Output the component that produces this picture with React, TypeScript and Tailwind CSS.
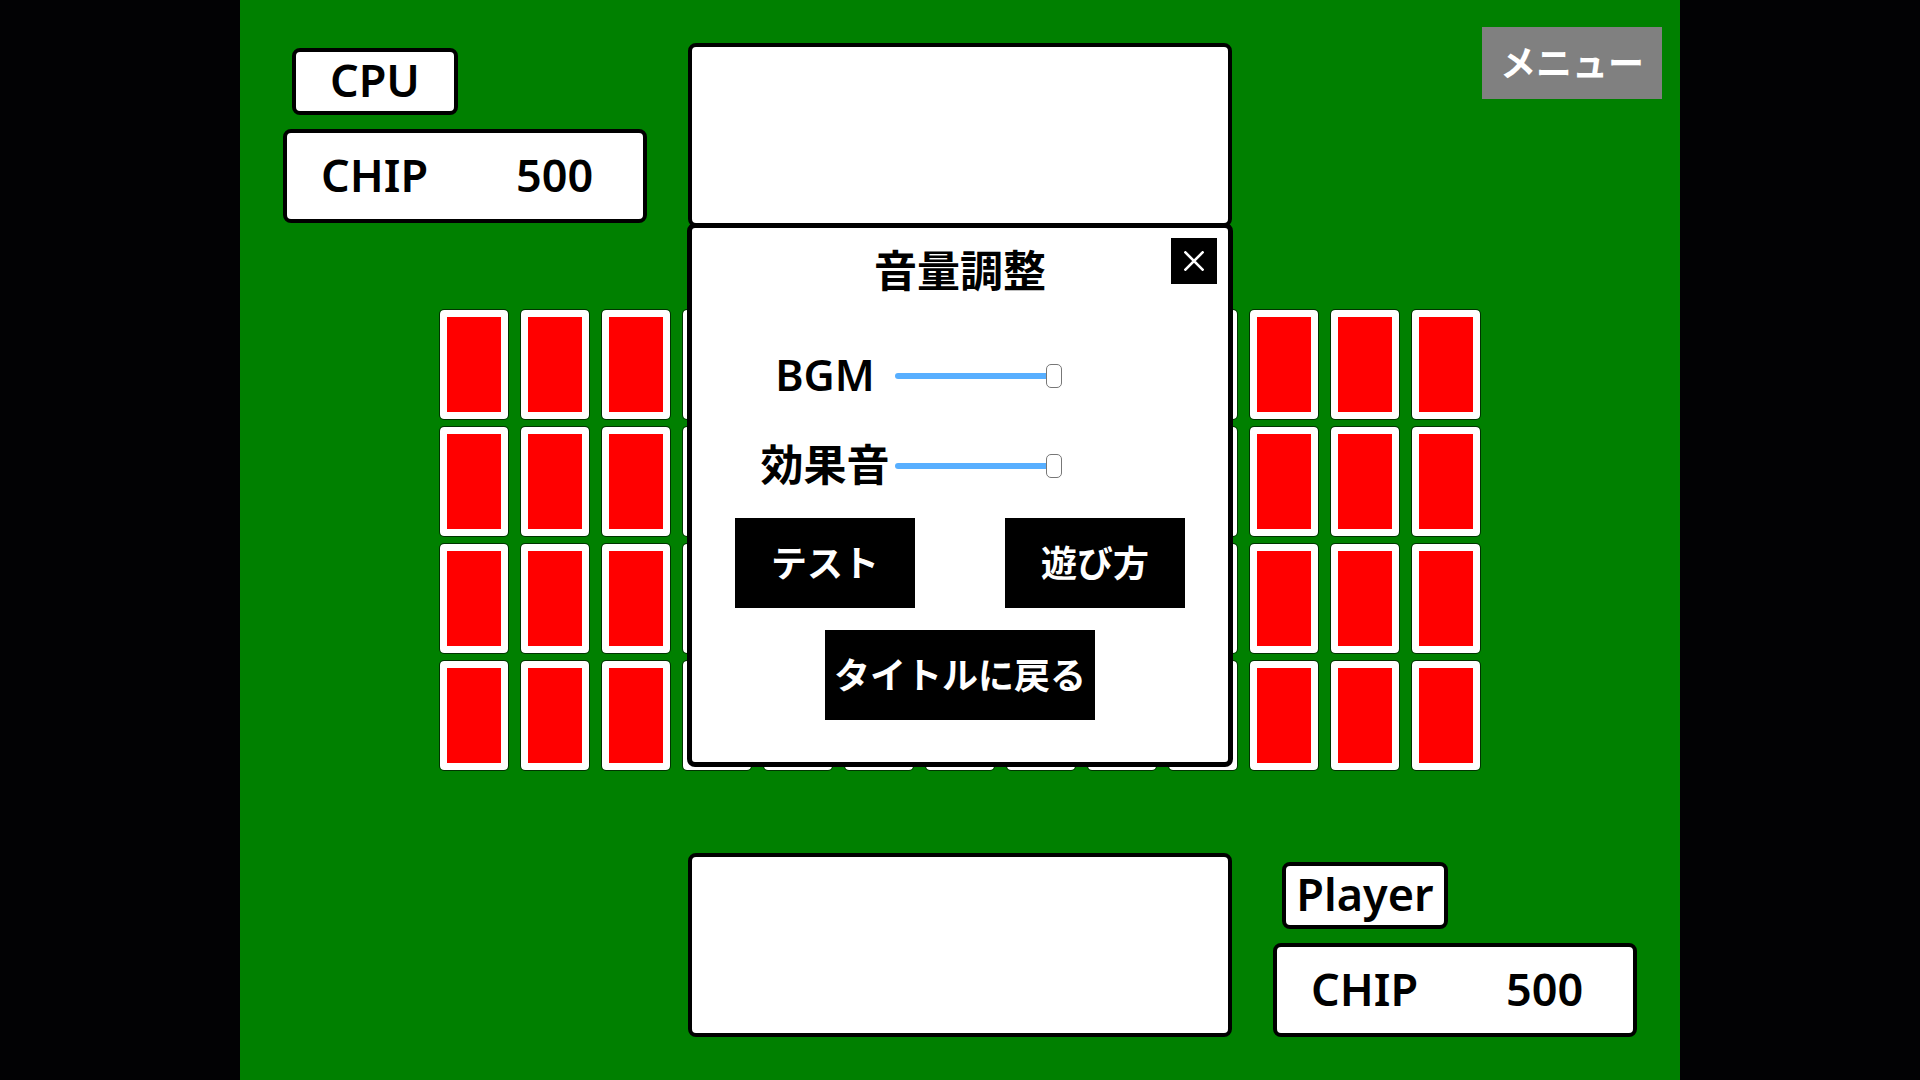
import { useState } from "react";

const CARDS = Array.from({ length: 52 }, (_, i) => i);

function Hand({ label }: { label: string }) {
  return (
    <section
      aria-label={label}
      className="h-[184px] w-[544px] rounded-lg border-4 border-black bg-white"
    />
  );
}

function Score({ name, chips }: { name: string; chips: number }) {
  return (
    <section className="flex w-[364px] flex-col gap-[14px] text-[45px] leading-[56px] font-semibold text-black">
      <h2 className="ml-[9px] h-[67px] w-[166px] rounded-lg border-4 border-black bg-white text-center">
        {name}
      </h2>
      <dl className="flex h-[94px] items-center rounded-lg border-4 border-black bg-white pb-[2px] pl-[34px]">
        <dt className="w-[195px]">CHIP</dt>
        <dd>{chips}</dd>
      </dl>
    </section>
  );
}

function Card() {
  return (
    <button
      type="button"
      aria-label="カード"
      className="h-[111px] w-[70px] rounded-[5px] border border-black/60 bg-white bg-clip-padding p-[7px]"
    >
      <span className="block h-full bg-[#ff0000]" />
    </button>
  );
}

function Volume({ id, label }: { id: string; label: string }) {
  const [value, setValue] = useState(100);
  return (
    <div className="flex h-[90px] items-center pl-[63px]">
      <label htmlFor={id} className="w-[140px] pb-[3px] text-center text-[43px] leading-[60px] font-semibold whitespace-nowrap">
        {label}
      </label>
      <input
        id={id}
        type="range"
        min={0}
        max={100}
        value={value}
        onChange={(e) => setValue(Number(e.target.value))}
        className="h-6 w-[167px] appearance-none bg-transparent [&::-webkit-slider-runnable-track]:h-[6px] [&::-webkit-slider-runnable-track]:rounded-sm [&::-webkit-slider-runnable-track]:bg-[#58afff] [&::-webkit-slider-thumb]:-mt-[9px] [&::-webkit-slider-thumb]:h-6 [&::-webkit-slider-thumb]:w-4 [&::-webkit-slider-thumb]:appearance-none [&::-webkit-slider-thumb]:rounded-[5px] [&::-webkit-slider-thumb]:border [&::-webkit-slider-thumb]:border-[#777777] [&::-webkit-slider-thumb]:bg-white"
      />
    </div>
  );
}

function SettingsDialog() {
  return (
    <div
      role="dialog"
      aria-labelledby="settings-title"
      className="relative h-[544px] w-[546px] rounded-lg border-[5px] border-black bg-white text-black"
    >
      <h1 id="settings-title" className="pt-[11px] text-center text-[43px] leading-[64px] font-bold">
        音量調整
      </h1>
      <button
        type="button"
        aria-label="閉じる"
        className="absolute top-[10px] right-[11px] flex size-[46px] items-center justify-center bg-black"
      >
        <svg viewBox="0 0 20 20" className="size-5" stroke="white" strokeWidth="2.6" fill="none">
          <path d="M0.5 0.5 19.5 19.5M19.5 0.5 0.5 19.5" />
        </svg>
      </button>
      <div className="mt-[28px]">
        <Volume id="bgm" label="BGM" />
        <Volume id="se" label="効果音" />
      </div>
      <div className="mt-[7px] flex flex-wrap justify-center gap-x-[90px] gap-y-[22px] text-[36px] font-bold text-white">
        <button type="button" className="h-[90px] w-[180px] bg-black pt-[2px]">
          テスト
        </button>
        <button type="button" className="h-[90px] w-[180px] bg-black pt-[2px]">
          遊び方
        </button>
        <button type="button" className="h-[90px] w-[270px] bg-black pt-[2px] whitespace-nowrap">
          タイトルに戻る
        </button>
      </div>
    </div>
  );
}

export default function App() {
  return (
    <div className="min-h-screen bg-[#020204] font-['Noto_Sans','Noto_Sans_CJK_JP',sans-serif]">
      <main className="relative mx-auto flex min-h-screen max-w-[1440px] flex-col justify-between bg-[#008000] pt-[27px] pb-[43px]">
        <header className="grid grid-cols-[1fr_auto_1fr] items-start">
          <div className="pt-[21px] pl-[43px]">
            <Score name="CPU" chips={500} />
          </div>
          <div className="pt-4">
            <Hand label="CPUの手札" />
          </div>
          <div className="flex justify-end pr-[18px]">
            <button type="button" className="h-[72px] w-[180px] bg-[#808080] pt-[2px] text-[36px] font-bold text-white">
              メニュー
            </button>
          </div>
        </header>
        <div className="grid grid-cols-[repeat(13,auto)] justify-center gap-x-[11px] gap-y-[6px]">
          {CARDS.map((i) => (
            <Card key={i} />
          ))}
        </div>
        <footer className="grid grid-cols-[1fr_auto_1fr] items-end">
          <div />
          <Hand label="Playerの手札" />
          <div className="flex justify-end pr-[43px]">
            <Score name="Player" chips={500} />
          </div>
        </footer>
        <div className="absolute inset-0 flex items-start justify-center pt-[223px]">
          <SettingsDialog />
        </div>
      </main>
    </div>
  );
}
